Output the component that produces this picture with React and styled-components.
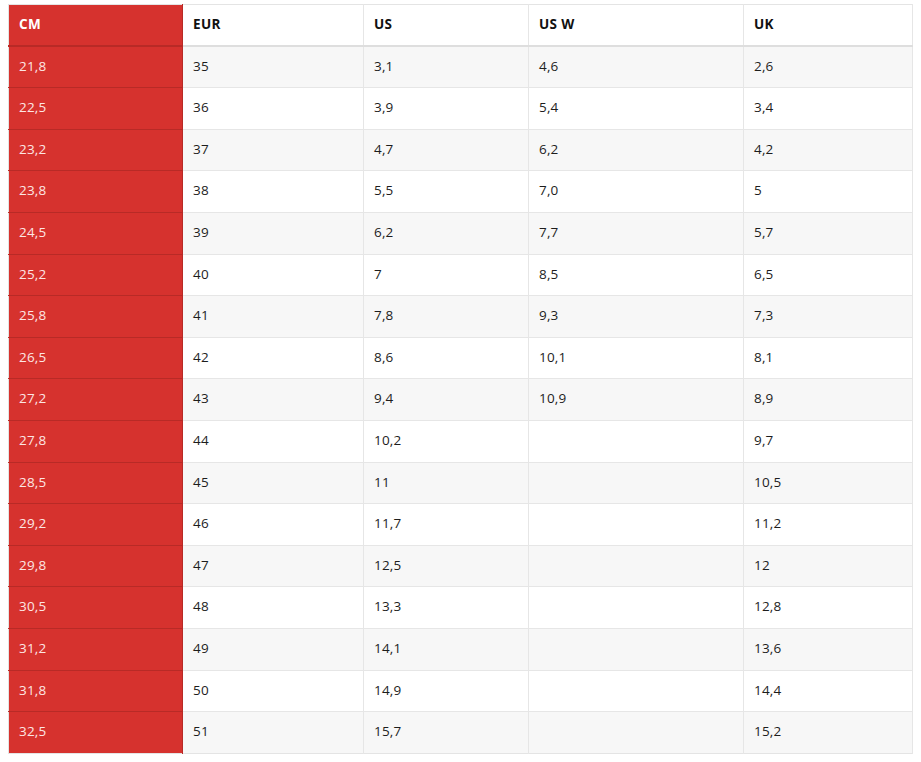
import styled, { createGlobalStyle } from "styled-components";

const GlobalStyle = createGlobalStyle`
    body {
        margin: 0;
        background: #fff;
        font-family: "Open Sans", "Liberation Sans", sans-serif;
    }
`;

const columns = [
    { key: "cm", label: "CM", width: 174 },
    { key: "eur", label: "EUR", width: 181 },
    { key: "us", label: "US", width: 165 },
    { key: "usw", label: "US W", width: 215 },
    { key: "uk", label: "UK", width: 169 },
];

const rows = [
    ["21,8", "35", "3,1", "4,6", "2,6"],
    ["22,5", "36", "3,9", "5,4", "3,4"],
    ["23,2", "37", "4,7", "6,2", "4,2"],
    ["23,8", "38", "5,5", "7,0", "5"],
    ["24,5", "39", "6,2", "7,7", "5,7"],
    ["25,2", "40", "7", "8,5", "6,5"],
    ["25,8", "41", "7,8", "9,3", "7,3"],
    ["26,5", "42", "8,6", "10,1", "8,1"],
    ["27,2", "43", "9,4", "10,9", "8,9"],
    ["27,8", "44", "10,2", "", "9,7"],
    ["28,5", "45", "11", "", "10,5"],
    ["29,2", "46", "11,7", "", "11,2"],
    ["29,8", "47", "12,5", "", "12"],
    ["30,5", "48", "13,3", "", "12,8"],
    ["31,2", "49", "14,1", "", "13,6"],
    ["31,8", "50", "14,9", "", "14,4"],
    ["32,5", "51", "15,7", "", "15,2"],
];

const Page = styled.div`
    padding: 4px 8px 8px 8px;
`;

const Table = styled.table`
    border-collapse: collapse;
    table-layout: fixed;
    width: 904px;
    font-size: 13.5px;
    line-height: 17.6px;
    border: 1px solid #e4e4e4;
`;

const HeadCell = styled.th`
    text-align: left;
    font-weight: 700;
    letter-spacing: 0.4px;
    color: ${p => (p.$accent ? "#fff" : "#111")};
    background: ${p => (p.$accent ? "#d6322e" : "#fff")};
    padding: 11px 10px 11px 10px;
    border-right: 1px solid ${p => (p.$accent ? "#b82a26" : "#e6e6e6")};
    border-bottom: 2px solid ${p => (p.$accent ? "#b82a26" : "#dedede")};
`;

const Row = styled.tr`
    background: ${p => (p.$striped ? "#f7f7f7" : "#fff")};
`;

const Cell = styled.td`
    padding: 11px 10px 12px 10px;
    letter-spacing: 0.2px;
    color: ${p => (p.$accent ? "#fde6e4" : "#1d1d1d")};
    background: ${p => (p.$accent ? "#d6322e" : "transparent")};
    border-right: 1px solid ${p => (p.$accent ? "#b82a26" : "#e6e6e6")};
    border-top: 1px solid ${p => (p.$accent ? "#b82a26" : "#e6e6e6")};
    height: 17.6px;
`;

const App = () => {
    return (
        <>
            <GlobalStyle />
            <Page>
                <Table>
                    <colgroup>
                        {columns.map(c => (
                            <col key={c.key} style={{ width: c.width }} />
                        ))}
                    </colgroup>
                    <thead>
                        <tr>
                            {columns.map((c, i) => (
                                <HeadCell key={c.key} $accent={i === 0}>{c.label}</HeadCell>
                            ))}
                        </tr>
                    </thead>
                    <tbody>
                        {rows.map((r, ri) => (
                            <Row key={r[0]} $striped={ri % 2 === 0}>
                                {r.map((v, ci) => (
                                    <Cell key={ci} $accent={ci === 0}>{v}</Cell>
                                ))}
                            </Row>
                        ))}
                    </tbody>
                </Table>
            </Page>
        </>
    );
};

export default App;
